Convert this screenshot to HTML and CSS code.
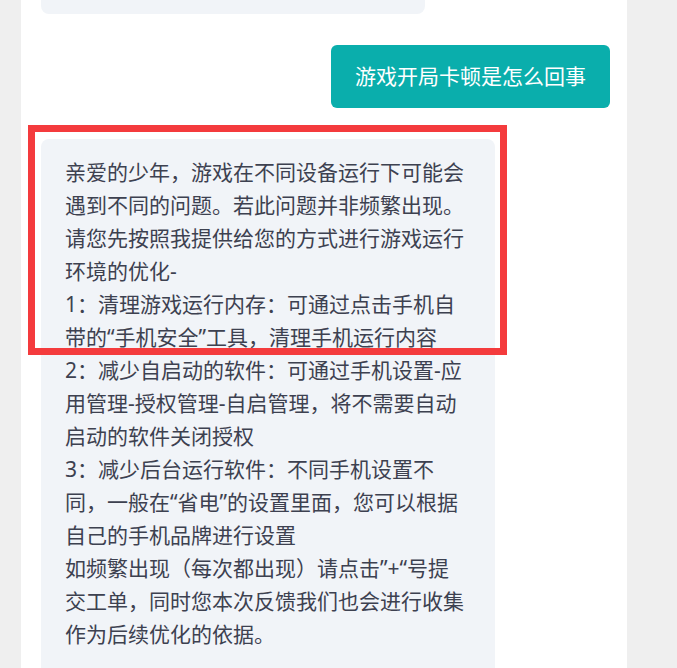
FILE: index.html
```html
<!DOCTYPE html>
<html lang="zh-CN">
<head>
<meta charset="utf-8">
<link rel="stylesheet" href="styles.css">
</head>
<body>
<div class="chat">
  <div class="bubble bot prev"></div>
  <div class="row right">
    <div class="bubble user">游戏开局卡顿是怎么回事</div>
  </div>
  <div class="bubble bot main">亲爱的少年，游戏在不同设备运行下可能会<br>遇到不同的问题。若此问题并非频繁出现。<br>请您先按照我提供给您的方式进行游戏运行<br>环境的优化-<br>1：清理游戏运行内存：可通过点击手机自<br>带的“手机安全”工具，清理手机运行内容<br>2：减少自启动的软件：可通过手机设置-应<br>用管理-授权管理-自启管理，将不需要自动<br>启动的软件关闭授权<br>3：减少后台运行软件：不同手机设置不<br>同，一般在“省电”的设置里面，您可以根据<br>自己的手机品牌进行设置<br>如频繁出现（每次都出现）请点击”+“号提<br>交工单，同时您本次反馈我们也会进行收集<br>作为后续优化的依据。</div>
  <div class="highlight"></div>
</div>
</body>
</html>
```
FILE: styles.css
```css
* { box-sizing: border-box; }
html, body {
  margin: 0;
  padding: 0;
  background: #efefef;
  height: 668px;
  overflow: hidden;
}
body {
  font-family: "Noto Sans", "Noto Sans CJK SC", sans-serif;
}
.chat {
  position: relative;
  margin-left: 21px;
  width: 606px;
  height: 668px;
  background: #ffffff;
  padding: 0 17px 0 20px;
  display: flex;
  flex-direction: column;
  align-items: flex-start;
}
.chat > * { flex-shrink: 0; }
.bubble.bot {
  background: #f1f4f8;
  color: #3d4150;
  border-radius: 8px;
}
.bubble.prev {
  width: 384px;
  height: 14px;
  border-radius: 0 0 8px 8px;
}
.row.right {
  align-self: stretch;
  display: flex;
  justify-content: flex-end;
  margin-top: 31px;
}
.bubble.user {
  background: #0aaeac;
  color: #ffffff;
  font-size: 21px;
  line-height: 30px;
  padding: 16px 24px 17px 24px;
  border-radius: 6px;
  white-space: nowrap;
}
.main {
  margin-top: 31px;
  width: 454px;
  padding: 17px 23px 40px 24px;
  font-size: 21px;
  line-height: 33px;
  white-space: nowrap;
}
.highlight {
  position: absolute;
  left: 7px;
  top: 125px;
  width: 479px;
  height: 230px;
  border: 7px solid #f43b3d;
}
```
